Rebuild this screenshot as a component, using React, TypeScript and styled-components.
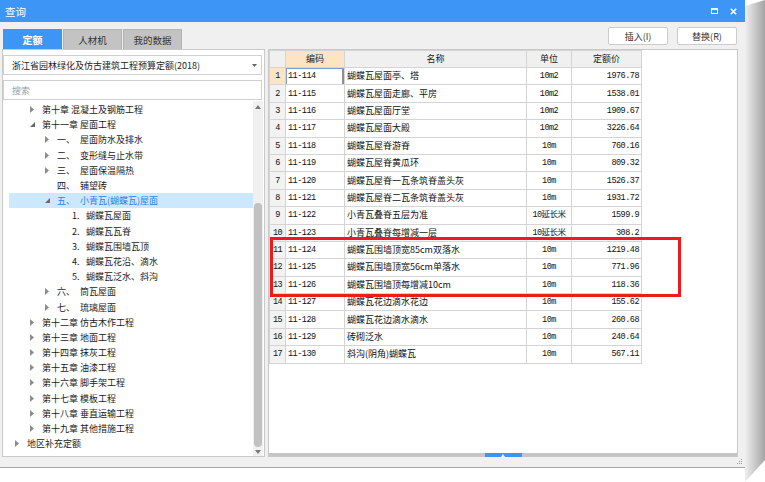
import React from "react";
import styled, { createGlobalStyle } from "styled-components";

type TreeItem = {
  level: number;
  arrow?: "open" | "closed";
  num?: string;
  label: string;
  selected?: boolean;
};

type Row = {
  code: string;
  name: string;
  unit: string;
  price: string;
};

const treeItems: TreeItem[] = [
  { level: 1, arrow: "closed", label: "第十章 混凝土及钢筋工程" },
  { level: 1, arrow: "open", label: "第十一章 屋面工程" },
  { level: 2, arrow: "closed", num: "一、", label: "屋面防水及排水" },
  { level: 2, arrow: "closed", num: "二、", label: "变形缝与止水带" },
  { level: 2, arrow: "closed", num: "三、", label: "屋面保温隔热" },
  { level: 2, num: "四、", label: "铺望砖" },
  { level: 2, arrow: "open", num: "五、", label: "小青瓦(蝴蝶瓦)屋面", selected: true },
  { level: 3, num: "1.", label: "蝴蝶瓦屋面" },
  { level: 3, num: "2.", label: "蝴蝶瓦瓦脊" },
  { level: 3, num: "3.", label: "蝴蝶瓦围墙瓦顶" },
  { level: 3, num: "4.", label: "蝴蝶瓦花沿、滴水" },
  { level: 3, num: "5.", label: "蝴蝶瓦泛水、斜沟" },
  { level: 2, arrow: "closed", num: "六、", label: "筒瓦屋面" },
  { level: 2, arrow: "closed", num: "七、", label: "琉璃屋面" },
  { level: 1, arrow: "closed", label: "第十二章 仿古木作工程" },
  { level: 1, arrow: "closed", label: "第十三章 地面工程" },
  { level: 1, arrow: "closed", label: "第十四章 抹灰工程" },
  { level: 1, arrow: "closed", label: "第十五章 油漆工程" },
  { level: 1, arrow: "closed", label: "第十六章 脚手架工程" },
  { level: 1, arrow: "closed", label: "第十七章 模板工程" },
  { level: 1, arrow: "closed", label: "第十八章 垂直运输工程" },
  { level: 1, arrow: "closed", label: "第十九章 其他措施工程" },
  { level: 0, arrow: "closed", label: "地区补充定额" },
];

const rows: Row[] = [
  { code: "11-114", name: "蝴蝶瓦屋面亭、塔", unit: "10m2", price: "1976.78" },
  { code: "11-115", name: "蝴蝶瓦屋面走廊、平房", unit: "10m2", price: "1538.01" },
  { code: "11-116", name: "蝴蝶瓦屋面厅堂", unit: "10m2", price: "1909.67" },
  { code: "11-117", name: "蝴蝶瓦屋面大殿", unit: "10m2", price: "3226.64" },
  { code: "11-118", name: "蝴蝶瓦屋脊游脊", unit: "10m", price: "760.16" },
  { code: "11-119", name: "蝴蝶瓦屋脊黄瓜环", unit: "10m", price: "809.32" },
  { code: "11-120", name: "蝴蝶瓦屋脊一瓦条筑脊盖头灰", unit: "10m", price: "1526.37" },
  { code: "11-121", name: "蝴蝶瓦屋脊二瓦条筑脊盖头灰", unit: "10m", price: "1931.72" },
  { code: "11-122", name: "小青瓦叠脊五层为准", unit: "10延长米", price: "1599.9" },
  { code: "11-123", name: "小青瓦叠脊每增减一层", unit: "10延长米", price: "308.2" },
  { code: "11-124", name: "蝴蝶瓦围墙顶宽85cm双落水", unit: "10m", price: "1219.48" },
  { code: "11-125", name: "蝴蝶瓦围墙顶宽56cm单落水", unit: "10m", price: "771.96" },
  { code: "11-126", name: "蝴蝶瓦围墙顶每增减10cm", unit: "10m", price: "118.36" },
  { code: "11-127", name: "蝴蝶瓦花边滴水花边", unit: "10m", price: "155.62" },
  { code: "11-128", name: "蝴蝶瓦花边滴水滴水", unit: "10m", price: "260.68" },
  { code: "11-129", name: "砖砌泛水", unit: "10m", price: "240.64" },
  { code: "11-130", name: "斜沟(阴角)蝴蝶瓦", unit: "10m", price: "567.11" },
];

const BLUE = "#3d95f5";
const PEACH = "#fde4c4";
const GRID = "#d4d4d4";

const GlobalStyle = createGlobalStyle`
  html, body { margin: 0; padding: 0; background: #fff; }
  body {
    font-family: "Noto Sans CJK SC", "Liberation Sans", sans-serif;
    font-size: 9px;
    color: #1a1a1a;
  }
`;

const Page = styled.div`
  display: flex;
  width: 765px;
  height: 482px;
  overflow: hidden;
`;

const Window = styled.div`
  box-sizing: border-box;
  width: 745px;
  height: 468px;
  display: flex;
  flex-direction: column;
  background: #f0f0f0;
  border-bottom: 1px solid #a9a9a9;
`;

const Shadow = styled.div`
  width: 20px;
  height: 482px;
  background: linear-gradient(to right, #efefef, #a4a4a4);
  clip-path: polygon(0 6px, 100% 0, 100% 460px, 0 100%);
`;

const TitleBar = styled.div`
  height: 22px;
  flex: none;
  background: ${BLUE};
  display: flex;
  align-items: center;
  justify-content: space-between;
  padding: 0 8px 0 5px;
`;

const Title = styled.span`
  color: #fff;
  font-size: 10.5px;
`;

const TitleIcons = styled.div`
  display: flex;
  align-items: center;
  gap: 12px;
`;

const Toolbar = styled.div`
  height: 27px;
  flex: none;
  display: flex;
  justify-content: space-between;
  padding: 0 8px 0 3px;
`;

const Tabs = styled.div`
  display: flex;
  align-items: flex-end;
  gap: 1px;
`;

const Tab = styled.div<{ $active?: boolean }>`
  box-sizing: border-box;
  width: 59px;
  height: 20px;
  display: flex;
  align-items: center;
  justify-content: center;
  font-size: ${(p) => (p.$active ? "10px" : "9.5px")};
  font-weight: ${(p) => (p.$active ? 700 : 400)};
  color: ${(p) => (p.$active ? "#fff" : "#333")};
  background: ${(p) => (p.$active ? BLUE : "#c3c3c3")};
  border: 1px solid ${(p) => (p.$active ? BLUE : "#b3b3b3")};
  border-bottom: none;
`;

const Buttons = styled.div`
  display: flex;
  gap: 9px;
  padding-top: 5px;
`;

const Button = styled.div`
  box-sizing: border-box;
  width: 60px;
  height: 18px;
  display: flex;
  align-items: center;
  justify-content: center;
  background: #fff;
  border: 1px solid #cbcbcb;
  border-radius: 2px;
  color: #333;
`;

const Body = styled.div`
  height: 408px;
  flex: none;
  display: flex;
  gap: 3px;
  padding-left: 2px;
`;

const LeftPanel = styled.div`
  box-sizing: border-box;
  width: 263px;
  border: 1px solid #c9c9c9;
  background: #fff;
  display: flex;
  flex-direction: column;
  padding-top: 5px;
`;

const Field = styled.div`
  box-sizing: border-box;
  height: 20px;
  margin-right: 2px;
  border: 1px solid #d0d0d0;
  display: flex;
  align-items: center;
  justify-content: space-between;
  padding: 0 4px 0 8px;
  color: #222;
  & + & {
    margin-top: 5px;
  }
`;

const Placeholder = styled.span`
  color: #9c9c9c;
`;

const TreeArea = styled.div`
  flex: 1;
  margin: 1px 1px 0 0;
  display: flex;
  min-height: 0;
`;

const TreeList = styled.div`
  flex: 1;
  padding: 1px 0 0 6px;
  overflow: hidden;
`;

const TreeRow = styled.div<{ $level: number; $selected?: boolean }>`
  height: 15.2px;
  display: flex;
  align-items: center;
  padding-left: ${(p) => 3 + p.$level * 15}px;
  background: ${(p) => (p.$selected ? "#cce8ff" : "transparent")};
  color: ${(p) => (p.$selected ? "#2a7fe0" : "#1a1a1a")};
  white-space: nowrap;
`;

const ArrowBox = styled.span`
  width: 15px;
  flex: none;
  display: flex;
  align-items: center;
  padding-left: 3px;
  box-sizing: border-box;
`;

const Num = styled.span<{ $wide?: boolean }>`
  width: ${(p) => (p.$wide ? 23 : 14)}px;
  flex: none;
`;

const ScrollBar = styled.div`
  width: 10px;
  flex: none;
  background: #f0f0f0;
  display: flex;
  flex-direction: column;
  align-items: center;
`;

const ScrollBtn = styled.div<{ $h: number }>`
  height: ${(p) => p.$h}px;
  flex: none;
  display: flex;
  align-items: center;
  justify-content: center;
`;

const ScrollTrack = styled.div`
  flex: 1;
  width: 100%;
  display: flex;
  flex-direction: column;
  align-items: center;
`;

const Thumb = styled.div`
  width: 8px;
  flex: 1;
  background: #c1c1c1;
  border-radius: 4px;
`;

const RightPanel = styled.div`
  box-sizing: border-box;
  width: 470px;
  position: relative;
  border: 1px solid #c9c9c9;
  border-bottom: none;
  background: #fff;
  display: flex;
  flex-direction: column;
`;

const TableArea = styled.div`
  flex: 1;
  overflow: hidden;
`;

const Grid = styled.table`
  border-collapse: collapse;
  table-layout: fixed;
  width: 372px;
`;

const HeadRow = styled.tr`
  height: 17px;
`;

const BodyRow = styled.tr`
  height: 17.4px;
`;

const HeadCell = styled.th<{ $hl?: boolean }>`
  padding: 0;
  line-height: 10px;
  font-weight: 400;
  text-align: center;
  color: #222;
  background: ${(p) => (p.$hl ? PEACH : "#f0f0f0")};
  border: 1px solid ${GRID};
`;

const Cell = styled.td<{ $align?: string; $mono?: boolean; $bg?: string; $focus?: boolean }>`
  padding: 0 2px;
  line-height: 10px;
  white-space: nowrap;
  overflow: hidden;
  text-align: ${(p) => p.$align || "left"};
  font-family: ${(p) =>
    p.$mono
      ? `"Liberation Mono", "Noto Sans CJK SC", monospace`
      : `"Noto Sans CJK SC", sans-serif`};
  font-size: ${(p) => (p.$mono ? "8.5px" : "9px")};
  letter-spacing: ${(p) => (p.$mono ? "-0.5px" : "0")};
  background: ${(p) => p.$bg || "#fff"};
  border: 1px solid ${GRID};
  box-shadow: ${(p) => (p.$focus ? "inset 1px 1px 0 #7a9fd0, inset -2px 0 0 #8e8e8e" : "none")};
  color: #111;
`;

const Highlight = styled.div`
  position: absolute;
  left: 1px;
  top: 187px;
  width: 411px;
  height: 60px;
  box-sizing: border-box;
  border: 3px solid #ec1c1c;
  pointer-events: none;
`;

const Splitter = styled.div`
  height: 4px;
  flex: none;
  background: #c6c6c6;
  display: flex;
  justify-content: center;
`;

const Handle = styled.div`
  width: 37px;
  background: ${BLUE};
  display: flex;
  align-items: center;
  justify-content: center;
`;

const Footer = styled.div`
  flex: 1;
  display: flex;
  justify-content: flex-end;
  align-items: flex-end;
  padding: 0 3px 3px 0;
`;

const Arrow = ({ kind }: { kind?: "open" | "closed" }) => {
  if (kind === "closed")
    return (
      <svg width="4" height="7" viewBox="0 0 4 7">
        <path d="M0 0 L4 3.5 L0 7Z" fill="#8c8c8c" />
      </svg>
    );
  if (kind === "open")
    return (
      <svg width="5" height="5" viewBox="0 0 5 5">
        <path d="M5 0 L5 5 L0 5Z" fill="#6a6a6a" />
      </svg>
    );
  return null;
};

const Tree = () => (
  <TreeArea>
    <TreeList>
      {treeItems.map((it, i) => (
        <TreeRow key={i} $level={it.level} $selected={it.selected}>
          <ArrowBox>
            <Arrow kind={it.arrow} />
          </ArrowBox>
          {it.num && <Num $wide={it.level === 2}>{it.num}</Num>}
          <span>{it.label}</span>
        </TreeRow>
      ))}
    </TreeList>
    <ScrollBar>
      <ScrollBtn $h={12}>
        <svg width="6" height="4" viewBox="0 0 6 4">
          <path d="M0 4 L3 0 L6 4Z" fill="#7a7a7a" />
        </svg>
      </ScrollBtn>
      <ScrollTrack>
        <Thumb style={{ marginTop: 90 }} />
      </ScrollTrack>
      <ScrollBtn $h={9}>
        <svg width="6" height="4" viewBox="0 0 6 4">
          <path d="M0 0 L6 0 L3 4Z" fill="#7a7a7a" />
        </svg>
      </ScrollBtn>
    </ScrollBar>
  </TreeArea>
);

const QuotaTable = () => (
  <Grid>
    <colgroup>
      <col style={{ width: 16 }} />
      <col style={{ width: 59 }} />
      <col style={{ width: 182 }} />
      <col style={{ width: 45 }} />
      <col style={{ width: 70 }} />
    </colgroup>
    <thead>
      <HeadRow>
        <HeadCell />
        <HeadCell $hl>编码</HeadCell>
        <HeadCell>名称</HeadCell>
        <HeadCell>单位</HeadCell>
        <HeadCell>定额价</HeadCell>
      </HeadRow>
    </thead>
    <tbody>
      {rows.map((r, i) => (
        <BodyRow key={r.code}>
          <Cell $mono $align="center" $bg={i === 0 ? PEACH : "#f2f2f2"}>
            {i + 1}
          </Cell>
          <Cell $mono $focus={i === 0}>
            {r.code}
          </Cell>
          <Cell>{r.name}</Cell>
          <Cell $mono $align="center">
            {r.unit}
          </Cell>
          <Cell $mono $align="right">
            {r.price}
          </Cell>
        </BodyRow>
      ))}
    </tbody>
  </Grid>
);

export default function App() {
  return (
    <>
      <GlobalStyle />
      <Page>
        <Window>
          <TitleBar>
            <Title>查询</Title>
            <TitleIcons>
              <svg width="7" height="6" viewBox="0 0 7 6">
                <rect x="0.5" y="0.5" width="6" height="5" fill="none" stroke="#fff" />
                <rect x="0" y="0" width="7" height="2" fill="#fff" />
              </svg>
              <svg width="7" height="7" viewBox="0 0 7 7">
                <path d="M0.8 0.8 L6.2 6.2 M6.2 0.8 L0.8 6.2" stroke="#fff" strokeWidth="1.6" />
              </svg>
            </TitleIcons>
          </TitleBar>
          <Toolbar>
            <Tabs>
              <Tab $active>定额</Tab>
              <Tab>人材机</Tab>
              <Tab>我的数据</Tab>
            </Tabs>
            <Buttons>
              <Button>插入(I)</Button>
              <Button>替换(R)</Button>
            </Buttons>
          </Toolbar>
          <Body>
            <LeftPanel>
              <Field>
                <span>浙江省园林绿化及仿古建筑工程预算定额(2018)</span>
                <svg width="5" height="3" viewBox="0 0 5 3">
                  <path d="M0 0 L5 0 L2.5 3Z" fill="#666" />
                </svg>
              </Field>
              <Field>
                <Placeholder>搜索</Placeholder>
              </Field>
              <Tree />
            </LeftPanel>
            <RightPanel>
              <TableArea>
                <QuotaTable />
              </TableArea>
              <Splitter>
                <Handle>
                  <svg width="4" height="3" viewBox="0 0 4 3">
                    <path d="M0 3 L2 0 L4 3Z" fill="#fff" />
                  </svg>
                </Handle>
              </Splitter>
              <Highlight />
            </RightPanel>
          </Body>
          <Footer>
            <svg width="5" height="5" viewBox="0 0 5 5">
              <rect x="4" y="0" width="1" height="1" fill="#999" />
              <rect x="2" y="2" width="1" height="1" fill="#999" />
              <rect x="4" y="2" width="1" height="1" fill="#999" />
              <rect x="0" y="4" width="1" height="1" fill="#999" />
              <rect x="2" y="4" width="1" height="1" fill="#999" />
              <rect x="4" y="4" width="1" height="1" fill="#999" />
            </svg>
          </Footer>
        </Window>
        <Shadow />
      </Page>
    </>
  );
}
